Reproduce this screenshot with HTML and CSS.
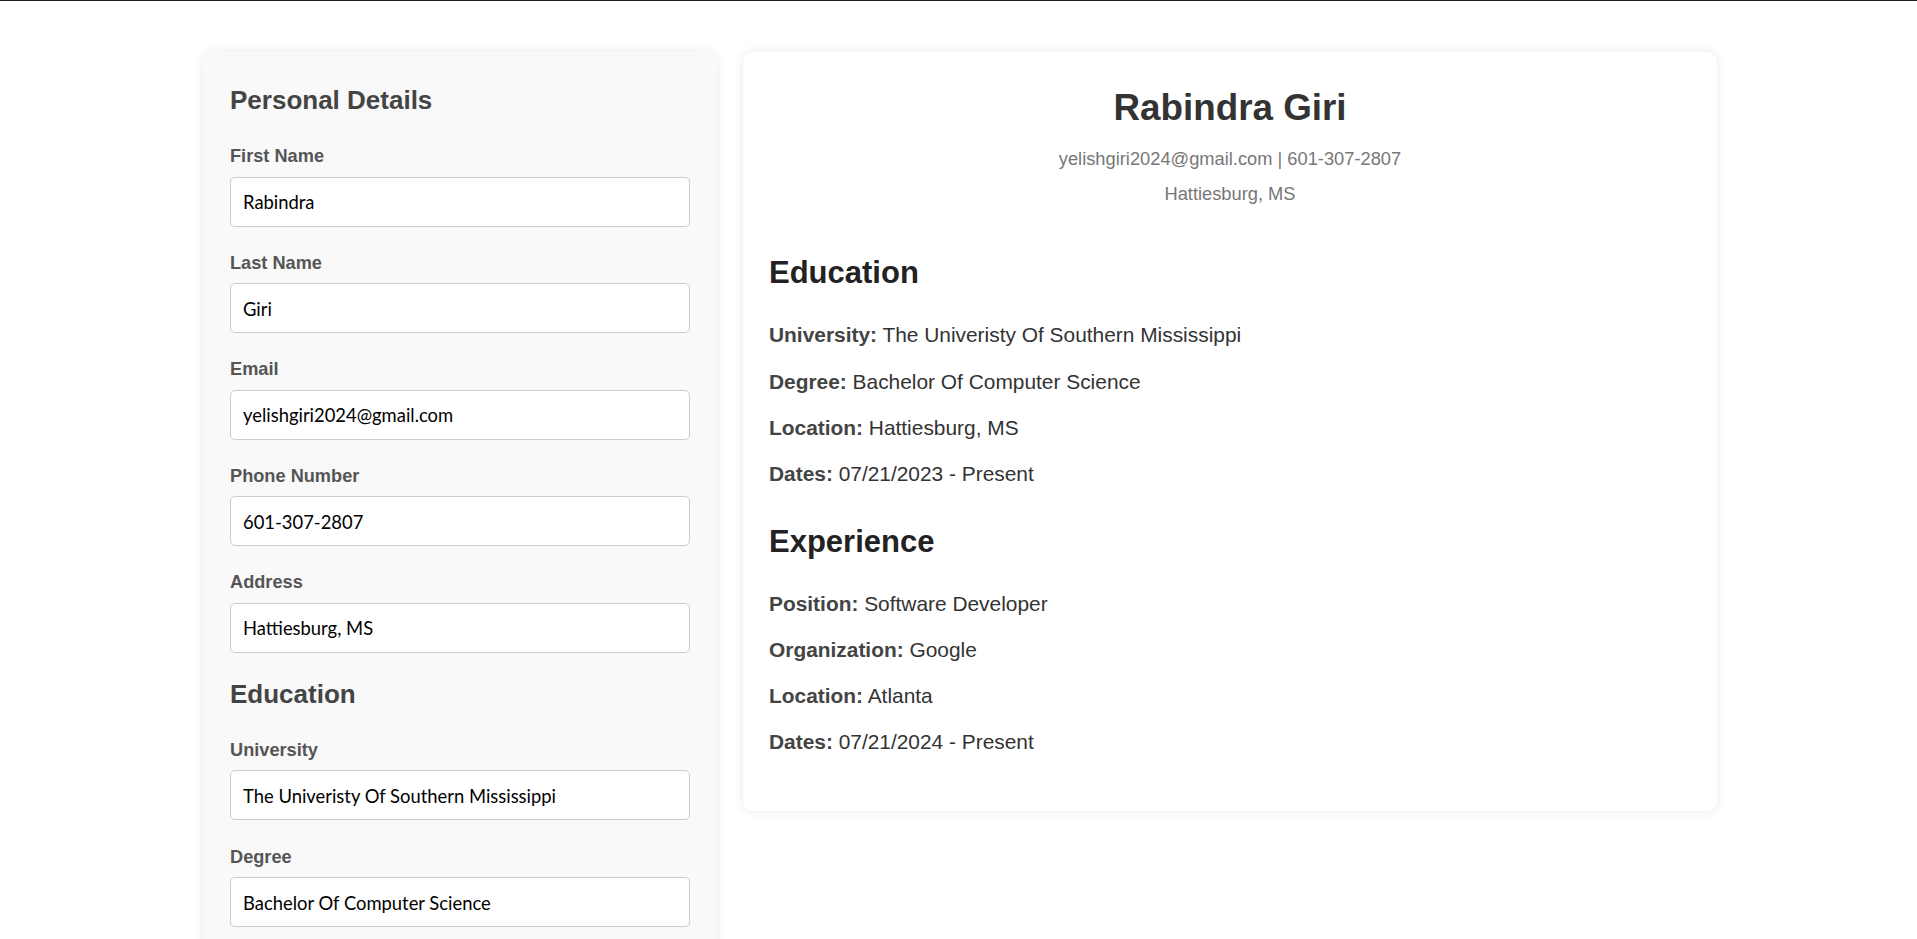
FILE: index.html
```html
<!DOCTYPE html>
<html lang="en">
<head>
<meta charset="utf-8">
<title>Resume Builder</title>
<link rel="stylesheet" href="styles.css">
</head>
<body>
<div class="app">
  <form class="editor">
    <h2 class="editor-title">Personal Details</h2>
    <div class="field"><label>First Name</label><input type="text" value="Rabindra"></div>
    <div class="field"><label>Last Name</label><input type="text" value="Giri"></div>
    <div class="field"><label>Email</label><input type="text" value="yelishgiri2024@gmail.com"></div>
    <div class="field"><label>Phone Number</label><input type="text" value="601-307-2807"></div>
    <div class="field"><label>Address</label><input type="text" value="Hattiesburg, MS"></div>

    <h2 class="editor-title">Education</h2>
    <div class="field"><label>University</label><input type="text" value="The Univeristy Of Southern Mississippi"></div>
    <div class="field"><label>Degree</label><input type="text" value="Bachelor Of Computer Science"></div>
    <div class="field"><label>Location</label><input type="text" value="Hattiesburg, MS"></div>
    <div class="field"><label>Dates</label><input type="text" value="07/21/2023 - Present"></div>

    <h2 class="editor-title">Experience</h2>
    <div class="field"><label>Position</label><input type="text" value="Software Developer"></div>
    <div class="field"><label>Organization</label><input type="text" value="Google"></div>
    <div class="field"><label>Location</label><input type="text" value="Atlanta"></div>
    <div class="field"><label>Dates</label><input type="text" value="07/21/2024 - Present"></div>
  </form>

  <section class="preview">
    <header class="preview-header">
      <h1 class="name">Rabindra Giri</h1>
      <p class="contact">yelishgiri2024@gmail.com | 601-307-2807</p>
      <p class="contact contact-loc">Hattiesburg, MS</p>
    </header>

    <div class="block">
      <h2 class="block-title">Education</h2>
      <p class="row"><strong>University:</strong> The Univeristy Of Southern Mississippi</p>
      <p class="row"><strong>Degree:</strong> Bachelor Of Computer Science</p>
      <p class="row"><strong>Location:</strong> Hattiesburg, MS</p>
      <p class="row"><strong>Dates:</strong> 07/21/2023 - Present</p>
    </div>

    <div class="block">
      <h2 class="block-title">Experience</h2>
      <p class="row"><strong>Position:</strong> Software Developer</p>
      <p class="row"><strong>Organization:</strong> Google</p>
      <p class="row"><strong>Location:</strong> Atlanta</p>
      <p class="row"><strong>Dates:</strong> 07/21/2024 - Present</p>
    </div>
  </section>
</div>
</body>
</html>
```
FILE: styles.css
```css
html, body {
  margin: 0;
  padding: 0;
  background: #ffffff;
}

body {
  border-top: 1px solid #1e1e1e;
  font-family: "Liberation Sans", Arial, sans-serif;
  color: #333;
}

.app {
  display: flex;
  align-items: flex-start;
  gap: 26px;
  max-width: 1514px;
  margin: 0 auto;
  padding: 51px 0 40px 3px;
}

/* ---------- Editor (left) ---------- */
.editor {
  flex: 0 0 514px;
  box-sizing: border-box;
  background: #f9f9f9;
  border-radius: 10px;
  box-shadow: 0 0 12px rgba(0, 0, 0, 0.09);
  padding: 33px 27px 27px;
}

.editor-title {
  margin: 0 0 31px;
  font-size: 26px;
  line-height: 30px;
  font-weight: 700;
  color: #444;
}

.field {
  margin-bottom: 26.1px;
}

.field label {
  display: block;
  font-size: 18.2px;
  line-height: 20px;
  font-weight: 700;
  color: #555;
  margin-bottom: 10.5px;
}

.field input {
  display: block;
  width: 100%;
  height: 50px;
  box-sizing: border-box;
  padding: 1px 12px 0;
  border: 1px solid #cccccc;
  border-radius: 5px;
  background: #ffffff;
  font-family: Lato, "Liberation Sans", sans-serif;
  font-size: 18.4px;
  color: #000;
}

/* ---------- Preview (right) ---------- */
.preview {
  flex: 1;
  box-sizing: border-box;
  background: #ffffff;
  border-radius: 10px;
  box-shadow: 0 0 12px rgba(0, 0, 0, 0.09);
  padding: 26px 26px 35px;
}

.preview-header {
  text-align: center;
}

.name {
  margin: 9.2px 0 0;
  font-size: 36.8px;
  line-height: 42px;
  font-weight: 700;
  color: #333;
}

.contact {
  margin: 19px 0 0;
  font-size: 18.3px;
  line-height: 22px;
  color: #777;
}

.contact-loc {
  margin-top: 13px;
}

.block-title {
  margin: 37.5px 0 31px;
  font-size: 31px;
  line-height: 36px;
  font-weight: 700;
  color: #222;
}

.preview-header + .block .block-title {
  margin-top: 50.3px;
}

.row {
  margin: 0 0 21.25px;
  font-size: 20.9px;
  line-height: 25px;
  color: #333;
}

.row strong {
  color: #444;
  font-weight: 700;
}
```
